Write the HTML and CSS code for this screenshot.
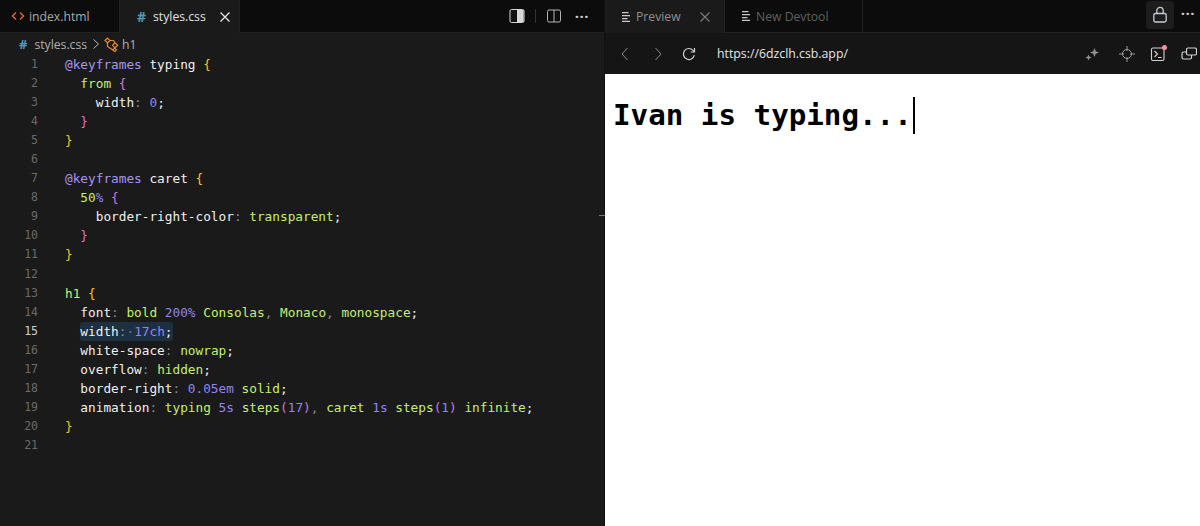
FILE: index.html
```html
<!DOCTYPE html>
<html lang="en">
<head>
<meta charset="utf-8">
<title>styles.css</title>
<link rel="stylesheet" href="styles.css">
</head>
<body>
<div class="app">
  <section class="editor">
    <header class="tabbar">
      <div class="tab">
        <svg class="ic" width="14" height="14" viewBox="0 0 14 14"><path d="M5 3.5 1.5 7 5 10.5M9 3.5 12.5 7 9 10.5" fill="none" stroke="#e2622c" stroke-width="1.5"/></svg>
        <span class="tab-label">index.html</span>
      </div>
      <div class="tab tab-active">
        <span class="hash">#</span>
        <span class="tab-label">styles.css</span>
        <svg class="close" width="12" height="12" viewBox="0 0 12 12"><path d="M1.5 1.5 10.5 10.5M10.5 1.5 1.5 10.5" stroke="#e4e4e4" stroke-width="1.3"/></svg>
      </div>
      <div class="tab-actions">
        <svg width="16" height="16" viewBox="0 0 16 16"><rect x="1" y="1.5" width="14" height="13" rx="1.5" fill="#101010" stroke="#d6d6d6"/><rect x="8" y="2" width="6.5" height="12" fill="#d8d8d8"/></svg>
        <span class="divider"></span>
        <svg width="16" height="16" viewBox="0 0 16 16"><rect x="1.5" y="2" width="13" height="12" rx="1.5" fill="none" stroke="#b4b4b4"/><path d="M8 2v12" stroke="#b4b4b4"/></svg>
        <span class="dots dots-left">···</span>
      </div>
    </header>
    <nav class="crumbs">
      <span class="hash hash-small">#</span>
      <span>styles.css</span>
      <svg width="8" height="12" viewBox="0 0 8 12"><path d="M1.5 1.5 6.5 6 1.5 10.5" fill="none" stroke="#b8b8b8" stroke-width="1"/></svg>
      <svg class="sym" width="15" height="15" viewBox="0 0 15 15" fill="none" stroke="#ea8a26" stroke-width="1.2"><path d="M1 3.5 3.5 1 6 3.5 3.5 6ZM11 5.8 13.6 8.3 11 10.8 8.5 8.3ZM10.6 11.2 12.4 13 10.6 14.6 8.9 13ZM6 3.5H9.5L11 5.8M3.5 6V9.5L8.9 13"/></svg>
      <span>h1</span>
    </nav>
    <div class="code">
      <div class="ln"><i>1</i><code><b class="k">@keyframes</b> typing <b class="y">{</b></code></div>
      <div class="ln"><i>2</i><code>  <b class="g">from</b> <b class="p">{</b></code></div>
      <div class="ln"><i>3</i><code>    width<b class="c">:</b> <b class="n">0</b>;</code></div>
      <div class="ln"><i>4</i><code>  <b class="p">}</b></code></div>
      <div class="ln"><i>5</i><code><b class="y">}</b></code></div>
      <div class="ln"><i>6</i><code></code></div>
      <div class="ln"><i>7</i><code><b class="k">@keyframes</b> caret <b class="y">{</b></code></div>
      <div class="ln"><i>8</i><code>  <b class="g">50</b><b class="n">%</b> <b class="p">{</b></code></div>
      <div class="ln"><i>9</i><code>    border-right-color<b class="c">:</b> <b class="g">transparent</b>;</code></div>
      <div class="ln"><i>10</i><code>  <b class="p">}</b></code></div>
      <div class="ln"><i>11</i><code><b class="y">}</b></code></div>
      <div class="ln"><i>12</i><code></code></div>
      <div class="ln"><i>13</i><code><b class="g">h1</b> <b class="y">{</b></code></div>
      <div class="ln"><i>14</i><code>  font<b class="c">:</b> <b class="g">bold</b> <b class="n">200%</b> <b class="g">Consolas</b><b class="c">,</b> <b class="g">Monaco</b><b class="c">,</b> <b class="g">monospace</b>;</code></div>
      <div class="ln ln-current"><i>15</i><code>  <span class="sel">width<b class="c">:</b><b class="ws">·</b><b class="n">17ch</b>;</span></code></div>
      <div class="ln"><i>16</i><code>  white-space<b class="c">:</b> <b class="g">nowrap</b>;</code></div>
      <div class="ln"><i>17</i><code>  overflow<b class="c">:</b> <b class="g">hidden</b>;</code></div>
      <div class="ln"><i>18</i><code>  border-right<b class="c">:</b> <b class="n">0.05em</b> <b class="g">solid</b>;</code></div>
      <div class="ln"><i>19</i><code>  animation<b class="c">:</b> <b class="g">typing</b> <b class="n">5s</b> <b class="g">steps</b><b class="p">(</b><b class="n">17</b><b class="p">)</b><b class="c">,</b> <b class="g">caret</b> <b class="n">1s</b> <b class="g">steps</b><b class="p">(</b><b class="n">1</b><b class="p">)</b> <b class="g">infinite</b>;</code></div>
      <div class="ln"><i>20</i><code><b class="y">}</b></code></div>
      <div class="ln"><i>21</i><code></code></div>
    </div>
  </section>
  <section class="preview">
    <header class="tabbar">
      <div class="ptab ptab-active">
        <svg class="lines" width="8" height="10" viewBox="0 0 8 10"><path d="M0 .7H6.5M0 3.7H8M0 6.7H5.5M0 9.3H8" stroke="#c8c8c8" stroke-width="1.2"/></svg>
        <span class="ptab-label">Preview</span>
        <svg class="pclose" width="12" height="12" viewBox="0 0 12 12"><path d="M1.5 1.5 10.5 10.5M10.5 1.5 1.5 10.5" stroke="#7c7c7c" stroke-width="1.1"/></svg>
      </div>
      <div class="ptab ptab-second">
        <svg class="lines" width="8" height="10" viewBox="0 0 8 10"><path d="M0 .7H6.5M0 3.7H8M0 6.7H5.5M0 9.3H8" stroke="#c8c8c8" stroke-width="1.2"/></svg>
        <span class="ptab-label dim">New Devtool</span>
      </div>
      <div class="right-actions">
        <div class="lock">
          <svg width="16" height="18" viewBox="0 0 16 18" fill="none" stroke="#c3ccd6" stroke-width="1.3"><rect x="1.8" y="7.5" width="12.4" height="8.5" rx="1.8"/><path d="M4.8 7.5V4.6a3.2 3.2 0 0 1 6.4 0V7.5"/></svg>
        </div>
        <span class="dots">···</span>
      </div>
    </header>
    <div class="toolbar">
      <svg class="nav" width="10" height="14" viewBox="0 0 10 14"><path d="M7.5 1 2 7l5.5 6" fill="none" stroke="#8a8a8a" stroke-width="1"/></svg>
      <svg class="nav nav2" width="10" height="14" viewBox="0 0 10 14"><path d="M2.5 1 8 7l-5.5 6" fill="none" stroke="#8a8a8a" stroke-width="1"/></svg>
      <svg class="reload" width="14" height="14" viewBox="0 0 14 14" fill="none" stroke="#d0d0d0" stroke-width="1.2"><path d="M12.3 8.2A5.5 5.5 0 1 1 10.9 3.2L12.3 4.8"/><path d="M12.5 1V5H8.6"/></svg>
      <span class="url">https://6dzclh.csb.app/</span>
      <div class="tools">
        <svg class="spark" width="16" height="16" viewBox="0 0 16 16" fill="#8f8f8f"><path d="M10.5 2 11.8 5.2 15 6.5 11.8 7.8 10.5 11 9.2 7.8 6 6.5 9.2 5.2ZM4.5 8.5 5.4 10.6 7.5 11.5 5.4 12.4 4.5 14.5 3.6 12.4 1.5 11.5 3.6 10.6Z"/></svg>
        <svg width="16" height="16" viewBox="0 0 16 16" fill="none" stroke="#9a9a9a"><circle cx="8" cy="8" r="4.5"/><path d="M8 0v5M8 11v5M0 8h5M11 8h5"/></svg>
        <span class="term">
          <svg width="16" height="16" viewBox="0 0 16 16" fill="none" stroke="#d4d4d4" stroke-width="1.1"><rect x="1.5" y="2" width="12.5" height="12.5" rx="1.5"/><path d="M4.5 5 7.5 8 4.5 11M8 11.5h3.5"/></svg>
          <span class="badge"></span>
        </span>
        <svg width="16" height="16" viewBox="0 0 16 16" fill="none" stroke="#d4d4d4" stroke-width="1.2"><rect x="5.5" y="2" width="10" height="7" rx="1.5"/><path d="M5.5 6H2.5A1.5 1.5 0 0 0 1 7.5V11.5A1.5 1.5 0 0 0 2.5 13H9A1.5 1.5 0 0 0 10.5 11.5V9"/></svg>
      </div>
    </div>
    <main class="page">
      <h1 class="typed">Ivan is typing...</h1>
    </main>
    <span class="sash"></span>
  </section>
</div>
</body>
</html>
```
FILE: styles.css
```css
* { box-sizing: border-box; }
html, body { margin: 0; height: 100%; background: #1a1a1a; overflow: hidden; }
svg { flex: none; display: block; }
.app { display: flex; height: 526px; font-family: "Open Sans", "Noto Sans", sans-serif; font-size: 12.2px; color: #c4c4c4; }

.editor { width: 604px; flex: none; display: flex; flex-direction: column; background: #1a1a1a; }
.preview { position: relative; flex: 1; display: flex; flex-direction: column; background: #151515; border-left: 1px solid #111; }

.tabbar { height: 33px; flex: none; display: flex; align-items: stretch; background: #0c0c0c; border-bottom: 1px solid #222; }
.tab { width: 120px; display: flex; align-items: center; padding-left: 11px; gap: 4px; border-right: 1px solid #222; }
.tab-label { color: #a9a9a9; }
.tab-active { background: #1a1a1a; padding-left: 17px; margin-bottom: -1px; gap: 7px; }
.tab-active .tab-label { color: #e2e2e2; }
.hash { color: #519aba; font-weight: 700; font-size: 14px; }
.close { margin-left: 6px; }
.tab-actions { margin-left: auto; display: flex; align-items: center; gap: 10px; padding-right: 15px; }
.divider { width: 1px; height: 14px; background: #333; }
.dots { color: #cfcfcf; font-size: 15px; font-weight: 700; letter-spacing: 0.5px; line-height: 1; }
.dots-left { margin-left: 3px; }

.crumbs { height: 22px; flex: none; display: flex; align-items: center; gap: 5px; padding: 0 0 0 19px; color: #b0b0b0; }
.hash-small { font-size: 13px; margin-right: 2px; }
.sym { margin: 0 -2px 0 -1px; }

.code { font-family: "DejaVu Sans Mono", "Liberation Mono", monospace; font-size: 12.75px; line-height: 19.05px; color: #f0f0f0; }
.ln { display: flex; height: 19.05px; }
.ln i { width: 38px; flex: none; font-style: normal; text-align: right; color: #6a6a6a; font-size: 11.5px; }
.ln code { font: inherit; white-space: pre; margin-left: 27px; }
.ln b { font-weight: 400; }
.ln-current i { color: #d0d0d0; }
.k { color: #a594f0; }
.y { color: #f5c518; }
.p { color: #d874d8; }
.g { color: #c5f06a; }
.n { color: #8f85f2; }
.c { color: #8a8a8a; }
.ln .ws { color: #5d7b97; }
.sel { background: #1c3042; border-radius: 3px; padding: 2px 0; }

.ptab { display: flex; align-items: center; gap: 6px; border-right: 1px solid #222; }
.ptab-active { width: 120px; padding-left: 17px; background: #1a1a1a; margin-bottom: -1px; }
.ptab-second { width: 138px; padding-left: 17px; }
.ptab-label { color: #8f8f8f; }
.dim { color: #606060; }
.pclose { margin-left: auto; margin-right: 13px; }
.right-actions { margin-left: auto; display: flex; align-items: flex-start; gap: 7px; padding: 1px 5px 0 0; }
.right-actions .dots { margin-top: 5px; }
.lock { width: 28px; height: 28px; border-radius: 4px; background: #1d1d1d; display: flex; align-items: center; justify-content: center; }

.toolbar { height: 41px; flex: none; display: flex; align-items: center; padding-left: 15px; background: #151515; }
.nav2 { margin-left: 23px; }
.reload { margin-left: 19px; }
.url { margin-left: 21px; color: #e6e6e6; font-size: 12.3px; }
.tools { margin-left: auto; display: flex; align-items: center; gap: 15px; padding-right: 3px; }
.spark { margin-right: 4px; transform: translateY(0); }
.term { position: relative; display: block; }
.badge { position: absolute; top: -1px; right: -1px; width: 5px; height: 5px; border-radius: 50%; background: #ff8fa0; }

.page { flex: 1; background: #fff; padding: 23px 0 0 8px; }
.typed { margin: 0; width: max-content; padding-right: 1px; border-right: 2px solid #000; font: bold 29.2px/37px "DejaVu Sans Mono", "Liberation Mono", monospace; color: #000; }
.sash { position: absolute; left: -6px; top: 215px; width: 6px; height: 1px; background: #777; }
```
